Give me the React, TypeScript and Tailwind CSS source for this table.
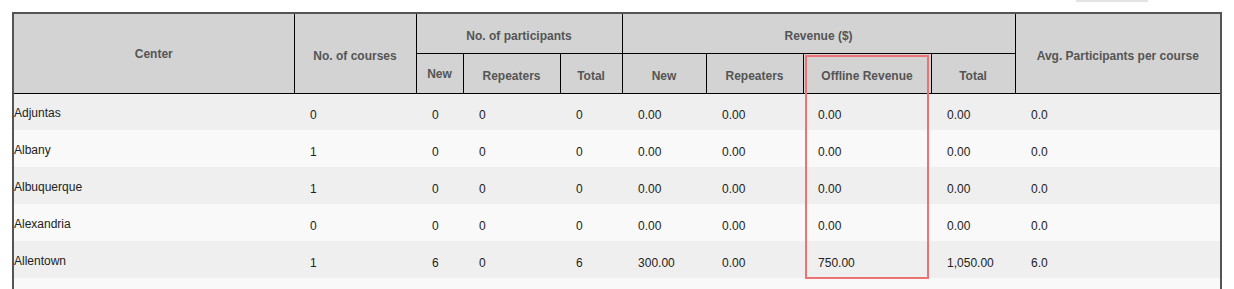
import React from 'react';

type Row = {
  center: string;
  courses: string;
  pNew: string;
  pRep: string;
  pTotal: string;
  rNew: string;
  rRep: string;
  rOffline: string;
  rTotal: string;
  avg: string;
};

const rows: Row[] = [
  { center: 'Adjuntas', courses: '0', pNew: '0', pRep: '0', pTotal: '0', rNew: '0.00', rRep: '0.00', rOffline: '0.00', rTotal: '0.00', avg: '0.0' },
  { center: 'Albany', courses: '1', pNew: '0', pRep: '0', pTotal: '0', rNew: '0.00', rRep: '0.00', rOffline: '0.00', rTotal: '0.00', avg: '0.0' },
  { center: 'Albuquerque', courses: '1', pNew: '0', pRep: '0', pTotal: '0', rNew: '0.00', rRep: '0.00', rOffline: '0.00', rTotal: '0.00', avg: '0.0' },
  { center: 'Alexandria', courses: '0', pNew: '0', pRep: '0', pTotal: '0', rNew: '0.00', rRep: '0.00', rOffline: '0.00', rTotal: '0.00', avg: '0.0' },
  { center: 'Allentown', courses: '1', pNew: '6', pRep: '0', pTotal: '6', rNew: '300.00', rRep: '0.00', rOffline: '750.00', rTotal: '1,050.00', avg: '6.0' },
];

const th = 'border border-black bg-[#d3d3d3] text-[12px] font-bold text-[#555] text-center align-middle p-0';
const td = 'text-[12px] text-[#222] text-left align-middle pl-4 pt-[6px] pb-0';

export default function App() {
  return (
    <div className="min-h-screen bg-white" style={{ fontFamily: '"Liberation Sans", Arial, sans-serif' }}>
      {/* bottom edge of a toolbar button, cut off */}
      <div className="flex justify-end pr-[86px]">
        <div className="h-[2px] w-[72px] bg-[#e3e3e3]" />
      </div>

      <div className="relative ml-3 mt-[10px] w-[1210px]">
        <table className="w-[1210px] table-fixed border-collapse border-2 border-[#555]">
          <colgroup>
            <col className="w-[281px]" />
            <col className="w-[122px]" />
            <col className="w-[47px]" />
            <col className="w-[97px]" />
            <col className="w-[62px]" />
            <col className="w-[84px]" />
            <col className="w-[97px]" />
            <col className="w-[128px]" />
            <col className="w-[84px]" />
            <col className="w-[206px]" />
          </colgroup>
          <thead>
            <tr className="h-[40px]">
              <th rowSpan={2} className={`${th} pt-[2px]`}>Center</th>
              <th rowSpan={2} className={`${th} pt-[5px]`}>No. of courses</th>
              <th colSpan={3} className={`${th} pt-[6px]`}>No. of participants</th>
              <th colSpan={4} className={`${th} pt-[6px]`}>Revenue ($)</th>
              <th rowSpan={2} className={`${th} pt-[5px]`}>Avg. Participants per course</th>
            </tr>
            <tr className="h-[40px]">
              <th className={`${th} pt-[2px]`}>New</th>
              <th className={`${th} pt-[6px]`}>Repeaters</th>
              <th className={`${th} pt-[6px]`}>Total</th>
              <th className={`${th} pt-[6px]`}>New</th>
              <th className={`${th} pt-[6px]`}>Repeaters</th>
              <th className={`${th} pt-[6px]`}>Offline Revenue</th>
              <th className={`${th} pt-[6px]`}>Total</th>
            </tr>
          </thead>
          <tbody>
            {rows.map((r, i) => (
              <tr key={r.center} className={`h-[37px] ${i % 2 === 0 ? 'bg-[#efefef]' : 'bg-[#f9f9f9]'}`}>
                <td className="text-[12px] text-[#222] text-left align-middle pl-0 pt-[3px] pb-0">{r.center}</td>
                <td className={td}>{r.courses}</td>
                <td className={td}>{r.pNew}</td>
                <td className={td}>{r.pRep}</td>
                <td className={td}>{r.pTotal}</td>
                <td className={td}>{r.rNew}</td>
                <td className={td}>{r.rRep}</td>
                <td className={`${td} pl-[15px]`}>{r.rOffline}</td>
                <td className={td}>{r.rTotal}</td>
                <td className={td}>{r.avg}</td>
              </tr>
            ))}
            {/* next row, its text below the visible area */}
            <tr className="h-[37px] bg-[#f9f9f9]">
              <td colSpan={10} />
            </tr>
          </tbody>
        </table>

        {/* highlight annotation around the Offline Revenue column */}
        <div className="pointer-events-none absolute left-[793px] top-[43px] h-[224px] w-[124px] border-2 border-[#ee7272]" />
      </div>
    </div>
  );
}
